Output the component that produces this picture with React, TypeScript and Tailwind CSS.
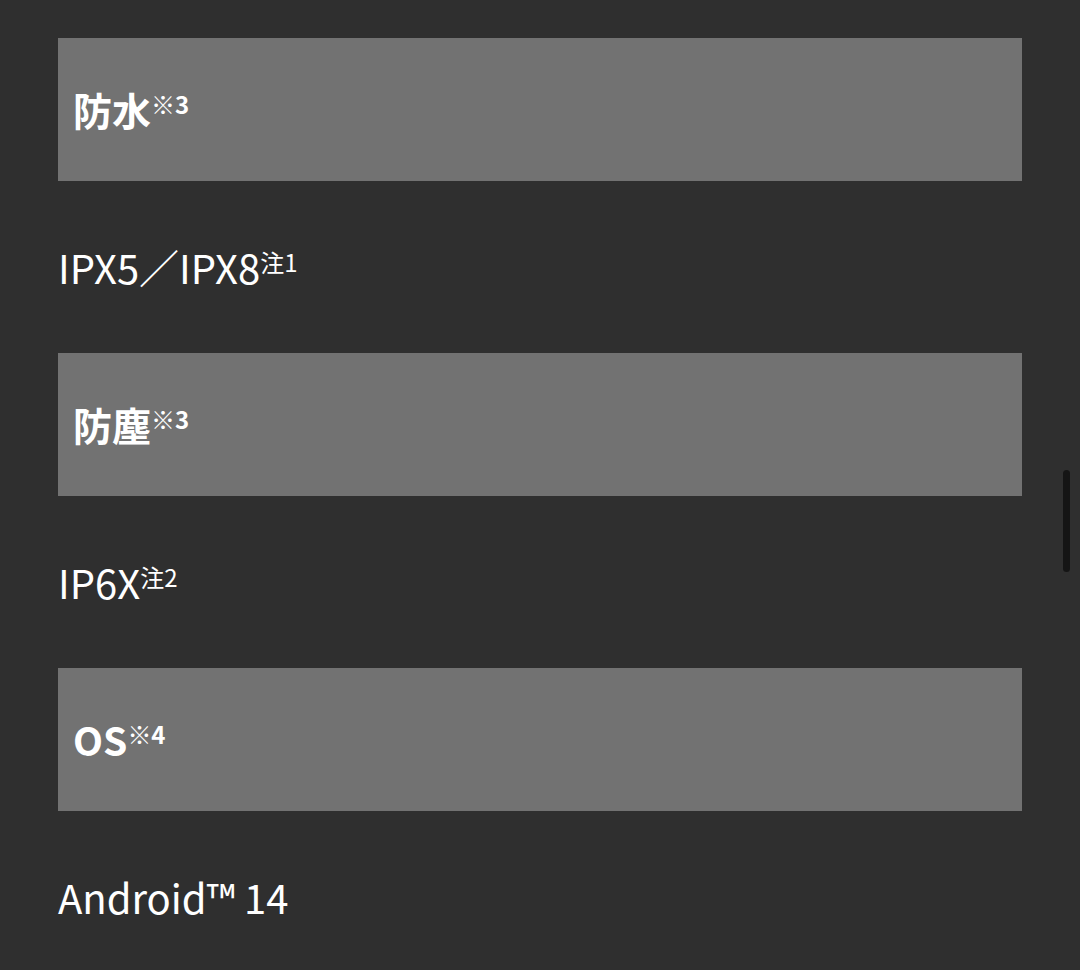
const specs = [
  { label: '防水', note: '※3', value: 'IPX5／IPX8', valueNote: '注1' },
  { label: '防塵', note: '※3', value: 'IP6X', valueNote: '注2' },
  { label: 'OS', note: '※4', value: 'Android™ 14', valueNote: '' },
]

export default function App() {
  return (
    <div
      className="relative h-[970px] w-[1080px] overflow-hidden bg-[#2f2f2f] text-white"
      style={{ fontFamily: '"Noto Sans CJK JP", "Noto Sans", sans-serif' }}
    >
      <div className="flex flex-col px-[58px] pt-[38px]">
        {specs.map((s) => (
          <div key={s.label}>
            <div className="flex h-[143px] items-center bg-[#727272] pl-[15px]">
              <h3 className="text-[39px] font-bold leading-none">
                {s.label}
                <sup className="text-[24px] font-bold">{s.note}</sup>
              </h3>
            </div>
            <div className="flex h-[172px] items-center">
              <p className="text-[40px] leading-none">
                {s.value}
                {s.valueNote && <sup className="text-[24px]">{s.valueNote}</sup>}
              </p>
            </div>
          </div>
        ))}
      </div>
      <div className="absolute right-[10px] top-[470px] h-[102px] w-[7px] rounded-full bg-[#151515]" />
    </div>
  )
}
